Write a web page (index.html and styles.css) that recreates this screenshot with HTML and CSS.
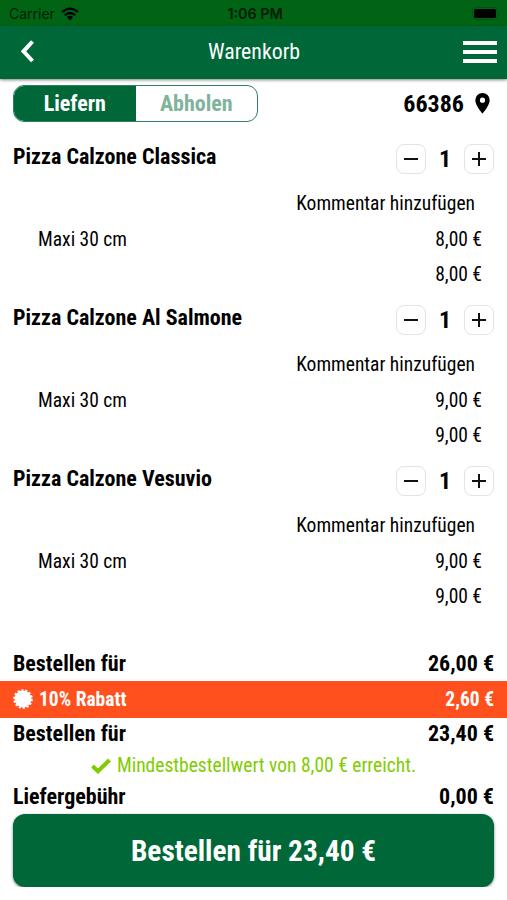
FILE: index.html
```html
<!DOCTYPE html>
<html lang="de">

<head>
    <meta charset="UTF-8">
    <meta name="viewport" content="width=device-width, initial-scale=1.0">
    <title>Warenkorb</title>
    <link rel="stylesheet" href="styles.css">
</head>

<body>

    <div class="statusbar">
        <div class="carrier">
            <span>Carrier</span>
            <svg width="18" height="14" viewBox="0 0 18 14">
                <path d="M1 5.2Q9-2 17 5.2M3.8 8.2Q9 3.8 14.2 8.2" fill="none" stroke="#000" stroke-width="2.3" />
                <path d="M5.9 10Q9 7.6 12.1 10L9 13.4z" />
            </svg>
        </div>
        <span class="time">1:06 PM</span>
        <svg class="battery" width="29" height="13" viewBox="0 0 29 13">
            <rect x="0.5" y="0.5" width="25" height="12" rx="3.5" fill="none" stroke="#00540f" />
            <rect x="2" y="2" width="22" height="9" rx="1.5" />
            <path d="M27 4.5Q29 6.5 27 8.5z" fill="#00540f" />
        </svg>
    </div>

    <header>
        <svg width="16" height="24" viewBox="0 0 16 24">
            <path d="M12.5 1.5L3.5 11.3L12.5 21" fill="none" stroke="#fff" stroke-width="4" />
        </svg>
        <h1>Warenkorb</h1>
        <div class="menu"><i></i><i></i><i></i></div>
    </header>

    <div class="options">
        <div class="switch">
            <span class="active">Liefern</span>
            <span>Abholen</span>
        </div>
        <div class="location">
            <span>66386</span>
            <svg width="15" height="21" viewBox="0 0 15 21">
                <path fill-rule="evenodd" d="M7.5 0A7.2 7.2 0 0 0 .3 7.2C.3 12.5 7.5 20.5 7.5 20.5S14.7 12.5 14.7 7.2A7.2 7.2 0 0 0 7.5 0zM7.5 4.6a2.6 2.6 0 1 1 0 5.2a2.6 2.6 0 0 1 0-5.2z" />
            </svg>
        </div>
    </div>

    <main>
        <div class="item">
            <div class="item-head">
                <h2>Pizza Calzone Classica</h2>
                <div class="stepper">
                    <button class="minus"></button>
                    <b>1</b>
                    <button class="plus"></button>
                </div>
            </div>
            <div class="comment">Kommentar hinzufügen</div>
            <div class="line"><span>Maxi 30 cm</span><span>8,00 €</span></div>
            <div class="line"><span></span><span>8,00 €</span></div>
        </div>
        <div class="item">
            <div class="item-head">
                <h2>Pizza Calzone Al Salmone</h2>
                <div class="stepper">
                    <button class="minus"></button>
                    <b>1</b>
                    <button class="plus"></button>
                </div>
            </div>
            <div class="comment">Kommentar hinzufügen</div>
            <div class="line"><span>Maxi 30 cm</span><span>9,00 €</span></div>
            <div class="line"><span></span><span>9,00 €</span></div>
        </div>
        <div class="item">
            <div class="item-head">
                <h2>Pizza Calzone Vesuvio</h2>
                <div class="stepper">
                    <button class="minus"></button>
                    <b>1</b>
                    <button class="plus"></button>
                </div>
            </div>
            <div class="comment">Kommentar hinzufügen</div>
            <div class="line"><span>Maxi 30 cm</span><span>9,00 €</span></div>
            <div class="line"><span></span><span>9,00 €</span></div>
        </div>
    </main>

    <footer>
        <div class="total"><span>Bestellen für</span><span>26,00 €</span></div>
        <div class="discount">
            <svg width="20" height="20" viewBox="-10 -10 20 20">
                <circle r="8.4" fill="#fff" />
                <circle r="8.7" fill="none" stroke="#fff" stroke-width="2.2" stroke-dasharray="2.2 1.704" />
            </svg>
            <span>10% Rabatt</span>
            <span class="amount">2,60 €</span>
        </div>
        <div class="total"><span>Bestellen für</span><span>23,40 €</span></div>
        <div class="minimum">
            <svg width="20" height="16" viewBox="0 0 20 16">
                <path d="M1.5 8L7 13.3L18.5 2" fill="none" stroke="#80cc00" stroke-width="4" />
            </svg>
            <span>Mindestbestellwert von 8,00 € erreicht.</span>
        </div>
        <div class="total"><span>Liefergebühr</span><span>0,00 €</span></div>
        <button class="order">Bestellen für 23,40 €</button>
    </footer>

</body>

</html>
```
FILE: styles.css
```css
* {
    box-sizing: border-box;
}

body {
    margin: 0;
    background-color: #fff;
    color: #000;
    font-family: 'Roboto Condensed', Roboto, sans-serif;
    font-stretch: 75%;
    font-size: 19.5px;
}

h1,
h2 {
    margin: 0;
}

svg {
    display: block;
}

.statusbar {
    display: grid;
    grid-template-columns: 1fr auto 1fr;
    align-items: center;
    height: 26px;
    padding: 1px 6px 0 9px;
    background-color: #006414;
    font-family: Inter, sans-serif;
    font-stretch: normal;
    font-size: 14px;
}

.carrier {
    display: flex;
    align-items: center;
    gap: 6px;
    color: #001c05;
}

.time {
    font-size: 14.3px;
    font-weight: 600;
    color: #001c05;
}

.battery {
    justify-self: end;
}

header {
    display: grid;
    grid-template-columns: 1fr auto 1fr;
    align-items: center;
    height: 53px;
    padding: 0 10px 2px 20px;
    background-color: #006838;
    color: #fff;
    box-shadow: 0 1px 3px rgba(0, 0, 0, 0.5);
}

header h1 {
    padding-right: 9px;
    font-size: 21.8px;
    font-weight: 400;
    line-height: 26px;
}

.menu {
    display: flex;
    flex-direction: column;
    justify-self: end;
    gap: 5px;
    width: 34px;
}

.menu i {
    height: 4px;
    background-color: #fff;
}

.options {
    display: flex;
    align-items: center;
    justify-content: space-between;
    height: 37px;
    margin-top: 6px;
    padding: 0 17px 0 13px;
}

.switch {
    display: flex;
    width: 245px;
    height: 37px;
    border: 1px solid #2f8259;
    border-radius: 11px;
    overflow: hidden;
    font-size: 22px;
    font-weight: 700;
    line-height: 35px;
    text-align: center;
    color: #80b39b;
}

.switch span {
    flex: 1;
}

.switch .active {
    background-color: #006838;
    color: #fff;
}

.location {
    display: flex;
    align-items: center;
    gap: 11px;
    font-size: 24px;
    font-weight: 700;
}

main {
    padding-top: 17px;
}

.item {
    height: 161px;
    padding: 5px 13px 0;
}

.item-head {
    display: flex;
    justify-content: space-between;
    height: 42px;
}

.item-head h2 {
    font-size: 22px;
    line-height: 25px;
}

.stepper {
    display: flex;
    align-items: center;
    width: 98px;
    height: 30px;
    justify-content: space-between;
}

.stepper b {
    font-size: 24px;
    line-height: 30px;
}

.stepper button {
    width: 30px;
    height: 30px;
    border: 1px solid #e3e3e3;
    border-radius: 8px;
    background: linear-gradient(#111, #111) center / 14px 2px no-repeat;
}

.stepper .plus {
    background: linear-gradient(#111, #111) center / 14px 2px no-repeat, linear-gradient(#111, #111) center / 2px 14px no-repeat;
}

.comment {
    padding-right: 19px;
    line-height: 36px;
    text-align: right;
}

.line {
    display: flex;
    justify-content: space-between;
    padding: 0 12px 0 25px;
    line-height: 35px;
}

footer {
    padding-top: 26px;
}

.total {
    display: flex;
    justify-content: space-between;
    padding: 0 13px;
    font-size: 22px;
    font-weight: 700;
    line-height: 32px;
}

.discount {
    display: flex;
    align-items: center;
    height: 37px;
    margin-top: 1px;
    padding: 0 13px;
    gap: 6px;
    background-color: #ff501e;
    color: #fff;
    font-weight: 700;
}

.discount svg {
    margin-top: -2px;
}

.amount {
    margin-left: auto;
}

.minimum {
    display: flex;
    align-items: center;
    justify-content: center;
    gap: 6px;
    line-height: 31px;
    color: #80cc00;
}

.order {
    display: block;
    width: 481px;
    height: 73px;
    margin: 1px 13px 0;
    border: 0;
    border-radius: 12px;
    background-color: #006838;
    color: #fff;
    font: inherit;
    font-stretch: 75%;
    font-size: 29.3px;
    font-weight: 700;
    box-shadow: 0 1px 3px rgba(0, 0, 0, 0.5);
}
```
